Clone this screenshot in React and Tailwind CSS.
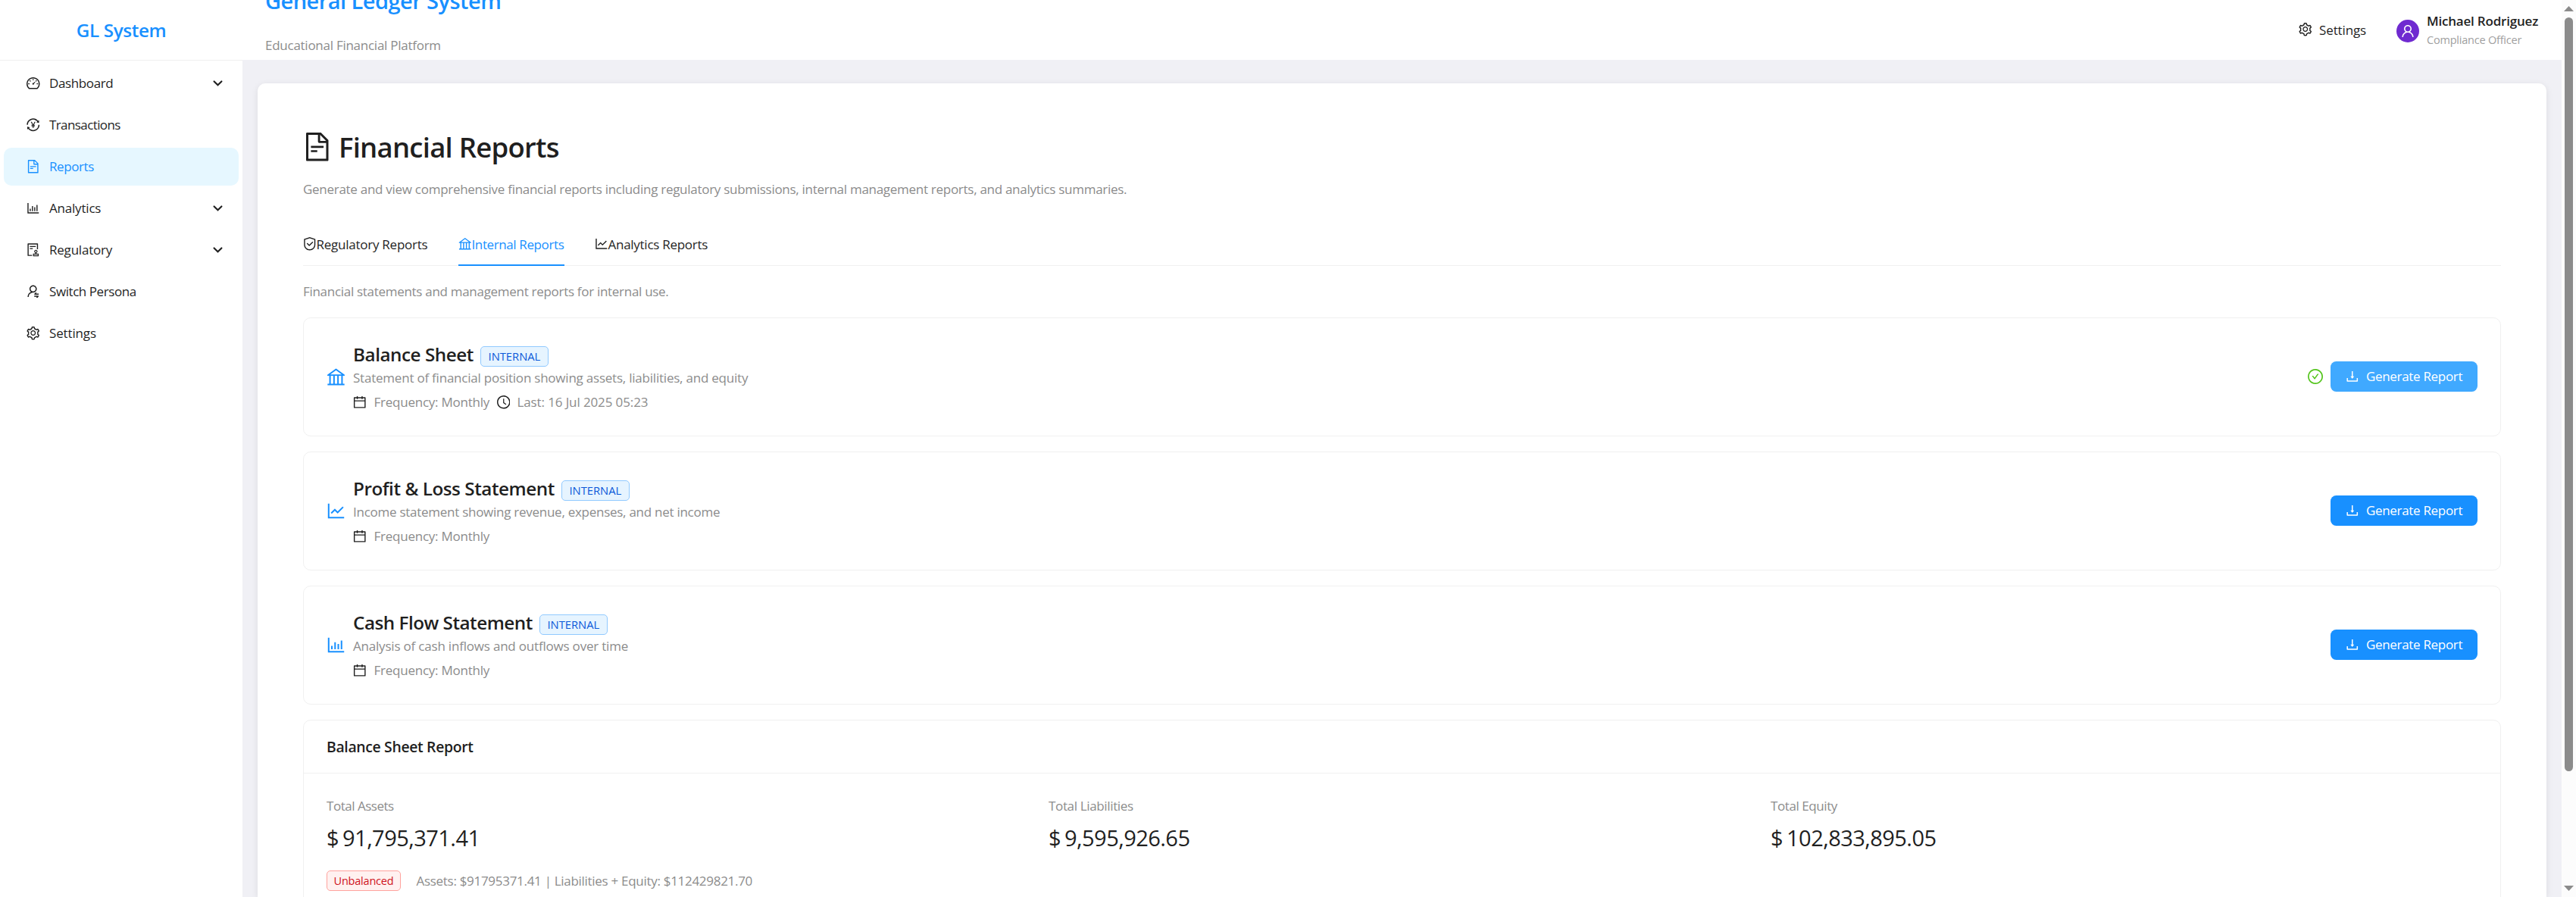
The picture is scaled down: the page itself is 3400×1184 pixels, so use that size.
import React from 'react';
import {
  AiOutlineAudit,
  AiOutlineBank,
  AiOutlineBarChart,
  AiOutlineCalendar,
  AiOutlineCheckCircle,
  AiOutlineClockCircle,
  AiOutlineDashboard,
  AiOutlineDownload,
  AiOutlineFileText,
  AiOutlineLineChart,
  AiOutlineSafety,
  AiOutlineSetting,
  AiOutlineTransaction,
  AiOutlineUser,
  AiOutlineUserSwitch,
} from 'react-icons/ai';

const menu = [
  { label: 'Dashboard', glyph: AiOutlineDashboard, sub: true, track: 'tracking-[-0.37px]' },
  { label: 'Transactions', glyph: AiOutlineTransaction, track: 'tracking-[-0.6px]' },
  { label: 'Reports', glyph: AiOutlineFileText, active: true, track: 'tracking-[-0.4px]' },
  { label: 'Analytics', glyph: AiOutlineBarChart, sub: true, track: 'tracking-[-0.2px]' },
  { label: 'Regulatory', glyph: AiOutlineAudit, sub: true, track: 'tracking-[-0.21px]' },
  { label: 'Switch Persona', glyph: AiOutlineUserSwitch, track: 'tracking-[-0.43px]' },
  { label: 'Settings', glyph: AiOutlineSetting, track: 'tracking-[-0.14px]' },
];

const reports = [
  {
    title: 'Balance Sheet',
    titleTrack: 'tracking-[-0.46px]',
    text: 'Statement of financial position showing assets, liabilities, and equity',
    textTrack: 'tracking-[-0.22px]',
    glyph: AiOutlineBank,
    last: 'Last: 16 Jul 2025 05:23',
    done: true,
  },
  {
    title: 'Profit & Loss Statement',
    titleTrack: 'tracking-[-0.46px]',
    text: 'Income statement showing revenue, expenses, and net income',
    textTrack: 'tracking-[-0.265px]',
    glyph: AiOutlineLineChart,
  },
  {
    title: 'Cash Flow Statement',
    titleTrack: 'tracking-[-0.49px]',
    text: 'Analysis of cash inflows and outflows over time',
    textTrack: 'tracking-[-0.2px]',
    glyph: AiOutlineBarChart,
  },
];

const totals = [
  { label: 'Total Assets', value: '91,795,371.41', track: 'tracking-[-0.48px]' },
  { label: 'Total Liabilities', value: '9,595,926.65', track: 'tracking-[-0.35px]' },
  { label: 'Total Equity', value: '102,833,895.05', track: 'tracking-[-0.42px]' },
];

// Crops the icon's built-in margin so the drawing fills its box.
function Icon({ glyph: Glyph, className = '' }) {
  return <Glyph viewBox="64 64 896 896" className={`shrink-0 ${className}`} />;
}

function Chevron() {
  return (
    <svg className="h-[8px] w-[13px]" viewBox="0 0 13 8" fill="none" stroke="currentColor" strokeWidth="2.1" strokeLinecap="round">
      <path d="M1.6 1.4 6.5 6.3 11.4 1.4" />
    </svg>
  );
}

function Sidebar() {
  return (
    <aside className="flex w-[320px] shrink-0 flex-col bg-white">
      <div className="flex h-[80px] shrink-0 items-center justify-center border-b border-[#f0f0f0] pt-px text-[24.25px] font-semibold tracking-[-0.37px] text-[#1890ff]">
        GL System
      </div>
      <nav className="flex flex-col gap-[5px] px-[5px] pt-[5px]">
        {menu.map(({ label, glyph, sub, active, track }) => (
          <div
            key={label}
            className={`flex h-[50px] items-center rounded-[10px] pr-[21px] pl-[30px] ${active ? 'bg-[#e6f7ff] text-[#1890ff]' : ''}`}
          >
            <Icon glyph={glyph} className="size-[17.5px]" />
            <span className={`ml-[12.5px] flex-1 leading-[28px] ${track}`}>{label}</span>
            {sub && <Chevron />}
          </div>
        ))}
      </nav>
    </aside>
  );
}

function Header() {
  return (
    <header className="flex h-[79px] shrink-0 items-start justify-between overflow-hidden bg-white px-[30px]">
      <div className="-mt-[19px] flex flex-col">
        <span className="text-[29px] leading-[40px] font-semibold tracking-[-0.54px] text-[#1890ff]">General Ledger System</span>
        <span className="mt-[25px] leading-[28px] tracking-[-0.26px] text-[#8c8c8c]">Educational Financial Platform</span>
      </div>
      <div className="flex h-[80px] items-center">
        <Icon glyph={AiOutlineSetting} className="mb-[2px] size-[17.5px]" />
        <span className="ml-[9.5px] leading-[28px] tracking-[-0.14px]">Settings</span>
        <div className="ml-[40px] flex items-center">
          <span className="mt-[2px] flex size-[30px] items-center justify-center rounded-full bg-[#6f2ad0] text-white">
            <Icon glyph={AiOutlineUser} className="size-[18px]" />
          </span>
          <div className="ml-[10px] flex w-[148px] flex-col leading-[25px]">
            <span className="font-semibold tracking-[-0.2px]">Michael Rodriguez</span>
            <span className="text-[14.5px] tracking-[-0.21px] text-[#a0a0a0]">Compliance Officer</span>
          </div>
        </div>
      </div>
    </header>
  );
}

function Tabs() {
  return (
    <div className="mt-[33px] flex h-[54px] gap-[40px] border-b border-[#f0f0f0]">
      <div className="flex w-[165px] items-center pb-px">
        <Icon glyph={AiOutlineSafety} className="mb-[2px] size-[17.5px]" />
        <span className="tracking-[-0.25px]">Regulatory Reports</span>
      </div>
      <div className="relative flex w-[140px] items-center pb-px text-[#1890ff]">
        <Icon glyph={AiOutlineBank} className="mb-[2px] size-[17.5px]" />
        <span className="tracking-[-0.39px]">Internal Reports</span>
        <span className="absolute inset-x-0 -bottom-px h-[2.5px] bg-[#1890ff]" />
      </div>
      <div className="flex items-center pb-px">
        <Icon glyph={AiOutlineLineChart} className="mb-[2px] size-[17.5px]" />
        <span className="tracking-[-0.27px]">Analytics Reports</span>
      </div>
    </div>
  );
}

function ReportCard({ report }) {
  const { title, titleTrack, text, textTrack, glyph, last, done } = report;
  return (
    <section className="flex h-[157px] shrink-0 items-center rounded-[10px] border border-[#f0f0f0] px-[30px]">
      <Icon glyph={glyph} className="size-[25px] text-[#1890ff]" />
      <div className="ml-[10px] flex flex-1 flex-col pb-px">
        <div className="flex h-[37px] items-end">
          <h4 className={`text-[24.25px] leading-[37px] font-semibold ${titleTrack}`}>{title}</h4>
          <span className="mb-[2px] ml-[9px] flex h-[27px] w-[90px] items-center justify-center rounded-[5px] border border-[#91caff] bg-[#e6f4ff] text-[14.75px] font-medium text-[#0958d9]">
            INTERNAL
          </span>
        </div>
        <p className={`leading-[25px] text-[#8c8c8c] ${textTrack}`}>{text}</p>
        <div className="mt-[6px] flex h-[28px] items-center">
          <Icon glyph={AiOutlineCalendar} className="size-[17.5px]" />
          <span className="ml-[10px] tracking-[-0.24px] text-[#8c8c8c]">Frequency: Monthly</span>
          {last && (
            <>
              <Icon glyph={AiOutlineClockCircle} className="ml-[9.5px] size-[17.5px]" />
              <span className="ml-[9.5px] tracking-[-0.12px] text-[#8c8c8c]">{last}</span>
            </>
          )}
        </div>
      </div>
      {done && <Icon glyph={AiOutlineCheckCircle} className="mr-[10px] mb-[2px] size-[20px] text-[#52c41a]" />}
      <button
        className={`mb-px flex h-[40px] w-[194px] items-center rounded-[7.5px] pl-[19.5px] text-white ${done ? 'bg-[#40a9ff]' : 'bg-[#1890ff]'}`}
      >
        <Icon glyph={AiOutlineDownload} className="size-[17.5px]" />
        <span className="ml-[10px] tracking-[-0.32px]">Generate Report</span>
      </button>
    </section>
  );
}

function BalanceSheetReport() {
  return (
    <section className="h-[400px] shrink-0 rounded-[10px] border border-[#f0f0f0]">
      <h5 className="flex h-[70px] items-center border-b border-[#f0f0f0] px-[30px] text-[19.4px] font-semibold tracking-[-0.34px]">
        Balance Sheet Report
      </h5>
      <div className="px-[30px] pt-[29px]">
        <div className="grid grid-cols-3 gap-x-[20px]">
          {totals.map(({ label, value, track }) => (
            <div key={label}>
              <div className={`leading-[28px] text-[#8c8c8c] ${track}`}>{label}</div>
              <div className="mt-[9px] flex gap-[5px] text-[29px] leading-[37px] tracking-[-0.54px]">
                <span>$</span>
                <span>{value}</span>
              </div>
            </div>
          ))}
        </div>
        <div className="mt-[25px] flex items-center">
          <span className="flex h-[27px] w-[98px] items-center justify-center rounded-[5px] border border-[#ffa39e] bg-[#fff1f0] text-[14.5px] tracking-[-0.21px] text-[#cf1322]">
            Unbalanced
          </span>
          <span className="ml-[20.5px] tracking-[-0.296px] text-[#8c8c8c]">
            Assets: $91795371.41 | Liabilities + Equity: $112429821.70
          </span>
        </div>
      </div>
    </section>
  );
}

function Scrollbar() {
  return (
    <div className="flex w-[19px] shrink-0 flex-col items-center bg-[#fcfcfc] pt-[8px] pb-[8px] text-[#8b8b8b]">
      <svg className="h-[7px] w-[13px]" viewBox="0 0 13 7" fill="currentColor">
        <path d="M6.5 0 13 7H0z" />
      </svg>
      <div className="mt-[8px] h-[995px] w-[11px] rounded-full bg-[#8b8b8b]" />
      <svg className="mt-auto h-[7px] w-[13px]" viewBox="0 0 13 7" fill="currentColor">
        <path d="M6.5 7 13 0H0z" />
      </svg>
    </div>
  );
}

export default function App() {
  return (
    <div className="flex h-[1184px] w-[3400px] overflow-hidden bg-white font-['Open_Sans',sans-serif] text-[17px] whitespace-nowrap text-[#1f1f1f]">
      <Sidebar />
      <div className="flex min-w-0 flex-1 flex-col bg-[#f0f0f5]">
        <Header />
        <main className="mx-[20px] mt-[31px] flex-1 rounded-t-[10px] bg-white px-[60px] pt-[59px] shadow-[0_2px_10px_rgba(0,0,0,0.09)]">
          <h2 className="flex h-[50px] items-center text-[36.5px] font-semibold tracking-[-0.76px]">
            <Icon glyph={AiOutlineFileText} className="size-[37.5px]" />
            <span className="ml-[9.5px]">Financial Reports</span>
          </h2>
          <p className="mt-[17px] leading-[28px] tracking-[-0.28px] text-[#8c8c8c]">
            Generate and view comprehensive financial reports including regulatory submissions, internal management reports, and
            analytics summaries.
          </p>
          <Tabs />
          <p className="mt-[20px] leading-[28px] tracking-[-0.295px] text-[#8c8c8c]">
            Financial statements and management reports for internal use.
          </p>
          <div className="mt-[20px] flex h-[765px] flex-col gap-[20px] overflow-hidden">
            {reports.map((report) => (
              <ReportCard key={report.title} report={report} />
            ))}
            <BalanceSheetReport />
          </div>
        </main>
      </div>
      <Scrollbar />
    </div>
  );
}
